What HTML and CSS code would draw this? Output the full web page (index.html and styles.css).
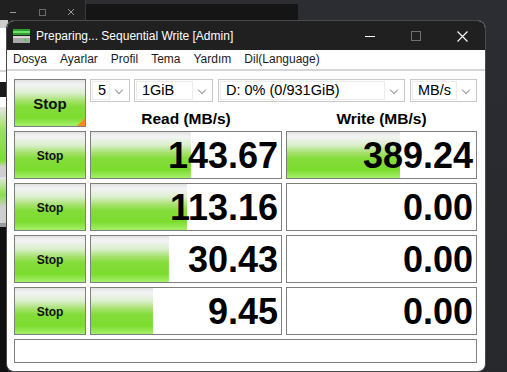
FILE: index.html
```html
<!DOCTYPE html>
<html lang="tr">
<head>
  <meta charset="UTF-8">
  <title>Preparing... Sequential Write [Admin]</title>
  <link rel="stylesheet" href="styles.css">
</head>
<body>
  <div class="desk">
    <!-- windows behind -->
    <div class="back-top">
      <div class="back-caption">
        <svg width="8" height="8" viewBox="0 0 8 8"><path d="M1 4.5h6" stroke="#9a9a9a" stroke-width="1"/></svg>
        <svg width="8" height="8" viewBox="0 0 8 8"><rect x="1.5" y="1.5" width="6" height="6" fill="none" stroke="#6a6a6a"/></svg>
        <svg width="8" height="8" viewBox="0 0 8 8"><path d="M1 1l6 6M7 1l-6 6" stroke="#9a9a9a" stroke-width="1"/></svg>
      </div>
    </div>
    <div class="back-bar"></div>
    <div class="back-left"></div>
    <div class="back-dark"></div>

    <!-- main window -->
    <div class="win">
      <div class="titlebar">
        <svg class="app-icon" width="17" height="14" viewBox="0 0 17 14">
          <rect x="0" y="0" width="17" height="6" fill="#2f9e2f"/>
          <rect x="0" y="2" width="17" height="2" fill="#6fe06f"/>
          <rect x="0" y="7" width="17" height="7" fill="#a8a8a8"/>
          <rect x="0" y="7" width="17" height="2" fill="#d6d6d6"/>
          <rect x="11" y="10" width="3" height="2" fill="#4ccf4c"/>
        </svg>
        <span class="title">Preparing... Sequential Write [Admin]</span>
        <div class="caption">
          <span class="cap-btn"><svg width="10" height="10" viewBox="0 0 10 10"><path d="M0 5.5h10" stroke="#fff" stroke-width="1"/></svg></span>
          <span class="cap-btn"><svg width="10" height="10" viewBox="0 0 10 10"><rect x="0.5" y="0.5" width="9" height="9" fill="none" stroke="#6f6f6f"/></svg></span>
          <span class="cap-btn"><svg width="11" height="11" viewBox="0 0 11 11"><path d="M0.5 0.5l10 10M10.5 0.5l-10 10" stroke="#fff" stroke-width="1.1"/></svg></span>
        </div>
      </div>

      <nav class="menu">
        <span>Dosya</span>
        <span>Ayarlar</span>
        <span>Profil</span>
        <span>Tema</span>
        <span>Yardım</span>
        <span>Dil(Language)</span>
      </nav>

      <main class="panel">
        <div class="stop stop-all">Stop</div>

        <div class="top-controls">
          <div class="combos">
            <div class="combo c-count"><span class="field">5</span><i class="arrow"></i></div>
            <div class="combo c-size"><span class="field">1GiB</span><i class="arrow"></i></div>
            <div class="combo c-drive"><span class="field">D: 0% (0/931GiB)</span><i class="arrow"></i></div>
            <div class="combo c-unit"><span class="field">MB/s</span><i class="arrow"></i></div>
          </div>
          <div class="heads">
            <div class="head">Read (MB/s)</div>
            <div class="head">Write (MB/s)</div>
          </div>
        </div>

        <div class="stop">Stop</div>
        <div class="cell" style="--fill: 52.6%">143.67</div>
        <div class="cell" style="--fill: 59.8%">389.24</div>

        <div class="stop">Stop</div>
        <div class="cell" style="--fill: 50.5%">113.16</div>
        <div class="cell">0.00</div>

        <div class="stop">Stop</div>
        <div class="cell" style="--fill: 41%">30.43</div>
        <div class="cell">0.00</div>

        <div class="stop">Stop</div>
        <div class="cell" style="--fill: 32.6%">9.45</div>
        <div class="cell">0.00</div>

        <div class="status"></div>
      </main>
    </div>
  </div>
</body>
</html>
```

FILE: styles.css
```css
* {
  margin: 0;
  padding: 0;
  box-sizing: border-box;
}

body {
  width: 507px;
  height: 372px;
  overflow: hidden;
  background: #2a2c31;
  font-family: 'Liberation Sans', Arial, sans-serif;
}

.desk {
  position: relative;
  width: 507px;
  height: 372px;
  background: linear-gradient(180deg, #2b2d32, #26282c);
}

/* windows in the background */
.back-top {
  position: absolute;
  left: -40px;
  top: -10px;
  width: 126px;
  height: 40px;
  background: #202020;
  border: 1px solid #3a3a3a;
  border-radius: 8px;
}

.back-caption {
  display: flex;
  gap: 21px;
  padding: 17px 0 0 48px;
}

.back-bar {
  position: absolute;
  left: 86px;
  top: 3px;
  width: 212px;
  height: 30px;
  background: #151515;
  border-top: 1px solid #2e2e2e;
}

.back-left {
  position: absolute;
  left: 0;
  top: 20px;
  width: 8px;
  height: 207px;
  background: linear-gradient(180deg,
    #cdcdcd 0 8px, #fff 8px 50px, #d4d4d4 50px 52px, #fff 52px 62px,
    #1a1a1a 62px 77px, #fff 77px 87px,
    #e4e4e4 87px, #9be063 110px, #7ddc33 140px, #cfcfcf 147px 157px,
    #e4e4e4 157px, #8ade4a 175px, #cfcfcf 187px 203px, #9a9a9a 203px 207px);
}

.back-dark {
  position: absolute;
  left: 0;
  top: 227px;
  width: 8px;
  height: 145px;
  background: #101010;
}

/* main window */
.win {
  position: absolute;
  left: 6px;
  top: 20px;
  width: 480px;
  height: 352px;
  border: 1px solid #4a4a4a;
  border-radius: 8px;
  overflow: hidden;
  background: #fff;
  display: flex;
  flex-direction: column;
}

.titlebar {
  height: 29px;
  flex: none;
  background: #202020;
  display: flex;
  align-items: center;
  color: #fff;
}

.app-icon {
  margin: 1px 0 0 6px;
}

.title {
  margin-left: 6px;
  font-size: 12px;
  line-height: 29px;
  padding-top: 1px;
}

.caption {
  margin-left: auto;
  display: flex;
  height: 29px;
}

.cap-btn {
  width: 46px;
  display: flex;
  align-items: center;
  justify-content: center;
  padding-top: 1px;
}

.menu {
  height: 21px;
  flex: none;
  display: flex;
  gap: 13px;
  padding-left: 6px;
  font-size: 12px;
  line-height: 19px;
  color: #1b1b1b;
  border-bottom: 2px solid #d6d6d6;
}

.panel {
  flex: 1;
  padding: 8px 0 0 7px;
  display: grid;
  grid-template-columns: 72px 192px 191px;
  grid-template-rows: repeat(5, 48px) 24px;
  gap: 4px;
  align-content: start;
}

.stop {
  border: 1px solid #7f7f7f;
  background: linear-gradient(180deg, #e2e2e2 0%, #f3f3f3 10%, #dcefcf 28%, #a6e26e 45%, #84dc3a 58%, #7cdc2e 82%, #a4f06a 100%);
  display: flex;
  align-items: center;
  justify-content: center;
  font-weight: bold;
  font-size: 12px;
  color: #111;
  padding-top: 1px;
}

.stop-all {
  position: relative;
  font-size: 15px;
}

.stop-all::after {
  content: "";
  position: absolute;
  right: 0;
  bottom: 0;
  border-style: solid;
  border-width: 0 0 8px 8px;
  border-color: transparent transparent #ff8a1c transparent;
}

.top-controls {
  grid-column: 2 / 4;
  display: flex;
  flex-direction: column;
}

.combos {
  display: flex;
  height: 23px;
}

.combo {
  display: flex;
  align-items: stretch;
  border: 1px solid #c9c9c9;
  background: #fff;
  padding: 1px;
}

.c-count { width: 40px; margin-right: 4px; }
.c-size { width: 79px; margin-right: 5px; }
.c-drive { width: 187px; margin-right: 5px; }
.c-unit { width: 67px; }

.field {
  flex: 1;
  border: 1px solid #ececec;
  font-size: 14.5px;
  line-height: 17px;
  padding-left: 5px;
  color: #000;
  white-space: nowrap;
}

.arrow {
  width: 18px;
  flex: none;
  position: relative;
}

.arrow::before {
  content: "";
  position: absolute;
  left: 6px;
  top: 6px;
  width: 5px;
  height: 5px;
  border-right: 1px solid #9a9a9a;
  border-bottom: 1px solid #9a9a9a;
  transform: rotate(45deg);
}

.heads {
  display: grid;
  grid-template-columns: 192px 191px;
  gap: 4px;
}

.head {
  text-align: center;
  font-weight: bold;
  font-size: 15.5px;
  line-height: 17px;
  padding-top: 8px;
  color: #000;
}

.cell {
  border: 1px solid #7f7f7f;
  background-color: #fff;
  background-image: linear-gradient(180deg, #e2e2e2 0%, #f3f3f3 10%, #dcefcf 28%, #a6e26e 45%, #84dc3a 58%, #7cdc2e 82%, #a4f06a 100%);
  background-repeat: no-repeat;
  background-size: var(--fill, 0%) 100%;
  text-align: right;
  font-weight: bold;
  font-size: 36px;
  line-height: 44px;
  padding: 2px 3px 0 0;
  color: #000;
}

.status {
  grid-column: 1 / 4;
  border: 1px solid #7f7f7f;
  background: #fff;
}
```
